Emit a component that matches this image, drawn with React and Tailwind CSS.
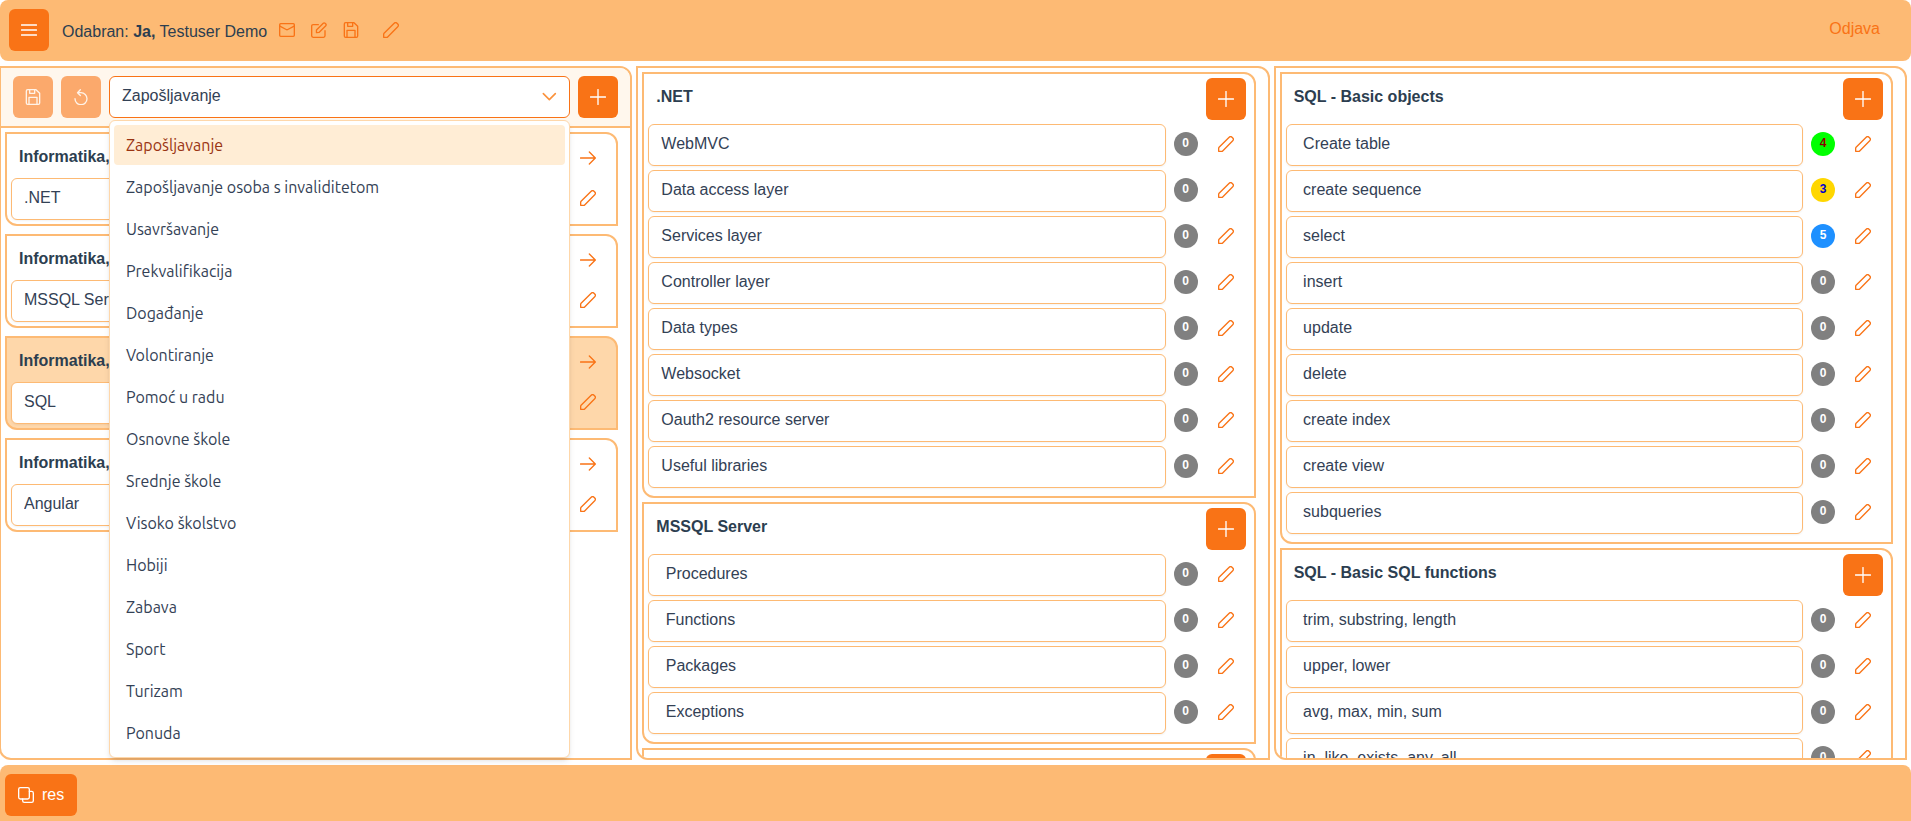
import React, { useState } from "react";

const ICONS = {
  bars: <path d="M.8 4.500h22.400M.8 12h22.400M.8 19.500h22.400" />,
  envelope: (
    <>
      <rect x="1" y="2.500" width="22" height="19" rx="1.600" />
      <path d="M1.300 6.200 10.800 11.300a2.500 2.500 0 0 0 2.400 0L22.700 6.200" />
    </>
  ),
  penSquare: (
    <>
      <path d="M11 4H3.200A2.200 2.200 0 0 0 1 6.200v14.600A2.200 2.200 0 0 0 3.200 23h15.600a2.200 2.200 0 0 0 2.200-2.200V13" />
      <path d="M8.200 16v-4L18.400 1.800a1.800 1.800 0 0 1 2.600 0l1.200 1.200a1.800 1.800 0 0 1 0 2.600L12 15.600z" />
    </>
  ),
  save: (
    <>
      <path d="M4 1h12.500L22 6.500V21a2 2 0 0 1-2 2H4a2 2 0 0 1-2-2V3a2 2 0 0 1 2-2z" />
      <path d="M7 1v5.500h7.500V1M6 23V12.500h12V23" />
    </>
  ),
  pencil: (
    <path d="M1 23v-4.600a2 2 0 0 1 .6-1.400L16.800 1.900a3 3 0 0 1 4.200 0l1.100 1.100a3 3 0 0 1 0 4.200L7 22.400a2 2 0 0 1-1.400.6z" />
  ),
  undo: <path d="M3 14.500A9 9 0 1 0 12 5.500H7M11 1.200 6.800 5.500 11 9.800" />,
  plus: <path d="M12 .8v22.400M.8 12h22.400" />,
  arrow: <path d="M.8 12h22M14 3l9 9-9 9" />,
  clone: (
    <>
      <rect x="1" y="1" width="16" height="17" rx="2.500" />
      <path d="M17 6.500h3.500A2.500 2.500 0 0 1 23 9v11.500a2.500 2.500 0 0 1-2.500 2.500h-11A2.500 2.500 0 0 1 7 20.500V18" />
    </>
  ),
  chevron: <path d="m2 7 9 9 9-9" />,
};

function Icon({ name, strokeWidth = 2 }) {
  return (
    <svg
      viewBox="0 0 24 24"
      fill="none"
      stroke="currentColor"
      strokeWidth={strokeWidth}
      strokeLinecap="round"
      strokeLinejoin="round"
      aria-hidden="true"
      className="size-4 shrink-0"
    >
      {ICONS[name]}
    </svg>
  );
}

function SolidButton({ icon, label, muted = false }) {
  return (
    <button
      type="button"
      aria-label={label}
      disabled={muted}
      className={`flex h-[42px] w-10 shrink-0 items-center justify-center rounded-md ${
        muted ? "bg-[#fba96c] text-[#fff3e8]" : "bg-[#f97316] text-white"
      }`}
    >
      <Icon name={icon} />
    </button>
  );
}

function GhostButton({ icon, label }) {
  return (
    <button
      type="button"
      aria-label={label}
      className="flex size-10 shrink-0 items-center justify-center rounded-md text-[#f97316]"
    >
      <Icon name={icon} />
    </button>
  );
}

function CardTitle({ children }) {
  return <h2 className="p-2 text-base leading-[22px] font-bold text-[#2c3e50]">{children}</h2>;
}

function TextField({ value, label }) {
  return (
    <input
      type="text"
      defaultValue={value}
      aria-label={label}
      className="h-[42px] min-w-0 flex-1 rounded-md border border-[#fdba74] bg-white px-3 pb-0.5 text-base text-[#334155] shadow-[0_1px_2px_rgba(18,18,23,0.05)] outline-none"
    />
  );
}

const BADGES = {
  0: "bg-[#808080] text-white",
  3: "bg-[#ffd700] text-[#0000cd]",
  4: "bg-[#00ff00] text-[#8b0000]",
  5: "bg-[#1e90ff] text-white",
};

function SkillCard({ title, items }) {
  return (
    <section className="flex flex-col gap-1 rounded-tr-xl rounded-bl-xl border-2 border-[#fdba74] bg-white pt-1 pr-2 pb-2 pl-1">
      <div className="flex items-start justify-between">
        <CardTitle>{title}</CardTitle>
        <SolidButton icon="plus" label={`Dodaj: ${title}`} />
      </div>
      {items.map(([text, level]) => (
        <div key={text} className="flex items-start gap-2">
          <TextField value={text} label={title} />
          <span
            className={`mt-2 size-6 shrink-0 rounded-full text-center text-xs leading-[22px] font-bold ${BADGES[level]}`}
          >
            {level}
          </span>
          <GhostButton icon="pencil" label={`Uredi: ${text.trim()}`} />
        </div>
      ))}
    </section>
  );
}

function GroupCard({ title, value, active }) {
  return (
    <section
      className={`rounded-tr-xl rounded-bl-xl border-2 border-[#fdba74] py-1 pr-2 pl-1 ${
        active ? "bg-[#fed7aa]" : "bg-white"
      }`}
    >
      <div className="flex items-start justify-between">
        <CardTitle>{title}</CardTitle>
        <GhostButton icon="arrow" label={`Otvori: ${value}`} />
      </div>
      <div className="flex items-start gap-2">
        <TextField value={value} label={title} />
        <GhostButton icon="pencil" label={`Uredi: ${value}`} />
      </div>
    </section>
  );
}

const CATEGORIES = [
  "Zapošljavanje",
  "Zapošljavanje osoba s invaliditetom",
  "Usavršavanje",
  "Prekvalifikacija",
  "Događanje",
  "Volontiranje",
  "Pomoć u radu",
  "Osnovne škole",
  "Srednje škole",
  "Visoko školstvo",
  "Hobiji",
  "Zabava",
  "Sport",
  "Turizam",
  "Ponuda",
];

const GROUPS = [".NET", "MSSQL Server", "SQL", "Angular"];

const zero = (names) => names.map((name) => [name, 0]);

const COLUMNS = [
  [
    {
      title: ".NET",
      items: zero([
        "WebMVC",
        "Data access layer",
        "Services layer",
        "Controller layer",
        "Data types",
        "Websocket",
        "Oauth2 resource server",
        "Useful libraries",
      ]),
    },
    { title: "MSSQL Server", items: zero([" Procedures", " Functions", " Packages", " Exceptions"]) },
    { title: "", items: [] },
  ],
  [
    {
      title: "SQL - Basic objects",
      items: [
        [" Create table", 4],
        [" create sequence", 3],
        [" select", 5],
        ...zero([" insert", " update", " delete", " create index", " create view", " subqueries"]),
      ],
    },
    {
      title: "SQL - Basic SQL functions",
      items: zero([" trim, substring, length", " upper, lower", " avg, max, min, sum", " in, like, exists, any, all"]),
    },
  ],
];

const PANEL = "flex min-h-0 min-w-0 flex-col rounded-tr-xl rounded-bl-xl border-2 border-[#fdba74] bg-white";

function CategoryPicker() {
  const [selected, setSelected] = useState(CATEGORIES[0]);
  return (
    <div className="relative min-w-0 flex-1">
      <select
        aria-label="Kategorija"
        value={selected}
        onChange={(e) => setSelected(e.target.value)}
        className="h-[42px] w-full appearance-none rounded-md border border-[#f97316] bg-white px-3 pb-0.5 text-base text-[#334155] outline-none"
      >
        {CATEGORIES.map((c) => (
          <option key={c}>{c}</option>
        ))}
      </select>
      <span className="pointer-events-none absolute inset-y-0 right-3 flex items-center text-[#fb923c]">
        <Icon name="chevron" strokeWidth={2.4} />
      </span>
      <ul
        role="listbox"
        aria-label="Kategorije"
        className="absolute inset-x-0 top-11 z-10 flex flex-col gap-0.5 rounded-md border border-[#fed7aa] bg-white p-1 font-['Ubuntu','Noto_Sans',sans-serif] text-base text-[#334155] shadow-md"
      >
        {CATEGORIES.map((c) => (
          <li
            key={c}
            role="option"
            aria-selected={c === selected}
            onClick={() => setSelected(c)}
            className={`h-10 cursor-pointer rounded-sm px-3 leading-10 ${
              c === selected ? "bg-[#ffedd5] text-[#9a3412]" : ""
            }`}
          >
            {c}
          </li>
        ))}
      </ul>
    </div>
  );
}

export default function App() {
  return (
    <div className="flex h-screen flex-col gap-[5px] overflow-hidden bg-white font-['Liberation_Sans',Arial,sans-serif] text-base text-[#2c3e50]">
      <header className="flex items-start rounded-lg bg-[#fdba74] px-[9px] pt-[9px] pb-2.5">
        <SolidButton icon="bars" label="Izbornik" />
        <p className="ml-[13px] self-center pt-1">
          Odabran: <b>Ja,</b> Testuser Demo
        </p>
        <div className="ml-3 flex items-center gap-4 self-center text-[#f97316]">
          <button type="button" aria-label="Poruke">
            <Icon name="envelope" />
          </button>
          <button type="button" aria-label="Uredi korisnika">
            <Icon name="penSquare" />
          </button>
          <button type="button" aria-label="Spremi">
            <Icon name="save" />
          </button>
          <button type="button" aria-label="Uredi" className="ml-2">
            <Icon name="pencil" />
          </button>
        </div>
        <a href="#odjava" className="mr-[22px] ml-auto py-2 text-[#f97316]">
          Odjava
        </a>
      </header>

      <main className="mr-1 -ml-px grid min-h-0 flex-1 grid-cols-3 grid-rows-1 gap-1">
        <div className={PANEL}>
          <div className="flex gap-2 rounded-tr-[10px] border-b-2 border-[#fdba74] bg-[#fff7ed] px-3 py-2">
            <SolidButton icon="save" label="Spremi" muted />
            <SolidButton icon="undo" label="Poništi" muted />
            <CategoryPicker />
            <SolidButton icon="plus" label="Dodaj" />
          </div>
          <div className="flex min-h-0 flex-1 flex-col gap-2 overflow-hidden py-1 pr-3 pl-1">
            {GROUPS.map((g) => (
              <GroupCard key={g} title={`Informatika, ${g}`} value={g} active={g === "SQL"} />
            ))}
          </div>
        </div>
        {COLUMNS.map((cards, i) => (
          <div key={i} className={`${PANEL} gap-1 overflow-hidden pt-1 pr-3 pl-1`}>
            {cards.map((card, j) => (
              <div key={j} className="shrink-0">
                <SkillCard {...card} />
              </div>
            ))}
          </div>
        ))}
      </main>

      <footer className="flex rounded-t-lg bg-[#fdba74] px-[5px] pt-[9px] pb-[5px]">
        <button
          type="button"
          className="flex h-[42px] items-center gap-2 rounded-md bg-[#f97316] px-[13px] text-white"
        >
          <Icon name="clone" />
          res
        </button>
      </footer>
    </div>
  );
}
